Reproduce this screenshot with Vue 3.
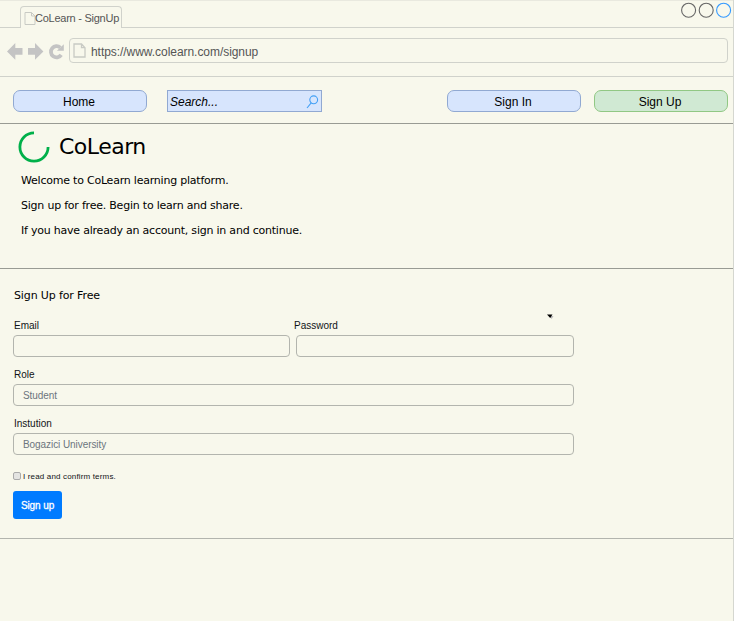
<script setup>
import { ref } from 'vue'

const email = ref('')
const password = ref('')
const role = ref('Student')
const institution = ref('Bogazici University')
const intro = [
  'Welcome to CoLearn learning platform.',
  'Sign up for free. Begin to learn and share.',
  'If you have already an account, sign in and continue.',
]
</script>

<template>
  <div class="window">
    <header class="tabs">
      <div class="strip"></div>
      <div class="tab">
        <svg class="tab-icon" width="12" height="15" viewBox="0 0 12 15">
          <path d="M1 1.5H7.5L11 5V13.5H1ZM7.5 1.5V5H11" />
        </svg>
        <span class="tab-title">CoLearn - SignUp</span>
      </div>
      <div class="strip grow">
        <svg width="52" height="18" viewBox="0 0 52 18">
          <circle cx="7.6" cy="9.2" r="7" />
          <circle cx="25.2" cy="9.2" r="7" />
          <circle class="active" cx="42.6" cy="9.2" r="7" />
        </svg>
      </div>
    </header>

    <div class="toolbar">
      <svg class="controls" width="58" height="18" viewBox="0 0 58 18">
        <path d="M0 9.4L8.3 1V6H15.5V12.8H8.3V17.7Z" />
        <path d="M36.4 9.4L28 1V6H21V12.8H28V17.7Z" />
        <path class="reload" d="M54.2 12.9A5.6 5.6 0 1 1 53.3 5.6" />
        <path d="M56.8 2.2V8.8H49.9Z" />
      </svg>
      <div class="address">
        <svg width="13" height="15" viewBox="0 0 13 15">
          <path d="M1 1H8.5L12 4.7V14H1ZM8.5 1V4.7H12" />
        </svg>
        <span class="url">https://www.colearn.com/signup</span>
      </div>
    </div>

    <nav class="nav">
      <button class="pill">Home</button>
      <div class="search">
        <span class="search-text">Search...</span>
        <svg width="13" height="14" viewBox="0 0 13 14">
          <circle cx="7.7" cy="4.8" r="3.9" />
          <path d="M5.2 7.9L1 13" />
        </svg>
      </div>
      <button class="pill sign-in">Sign In</button>
      <button class="pill green">Sign Up</button>
    </nav>

    <section class="intro">
      <div class="brand">
        <svg width="32" height="32" viewBox="0 0 32 32">
          <path d="M16 1.9A14.1 14.1 0 1 0 30.1 16" />
        </svg>
        <h1>CoLearn</h1>
      </div>
      <p v-for="line in intro" :key="line">{{ line }}</p>
    </section>

    <form class="form" @submit.prevent>
      <h2>Sign Up for Free</h2>
      <svg class="caret" width="7" height="5" viewBox="0 0 7 5">
        <path class="shade" d="M2 2H6.5L4.7 5Z" />
        <path d="M0 .5H5.5L3.2 4Z" />
      </svg>
      <div class="row">
        <label class="field email"><span>Email</span><input v-model="email" type="email" /></label>
        <label class="field password"><span>Password</span><input v-model="password" type="password" /></label>
      </div>
      <label class="field"><span>Role</span><input v-model="role" /></label>
      <label class="field"><span>Instution</span><input v-model="institution" /></label>
      <label class="terms"><input type="checkbox" /><span>I read and confirm terms.</span></label>
      <button class="submit">Sign up</button>
    </form>
  </div>
</template>

<style>
body {
  margin: 0;
  background: #f8f8ec;
}
</style>

<style scoped>
* {
  box-sizing: border-box;
}
.window {
  width: 734px;
  height: 621px;
  background: #f8f8ec;
  border-right: 1px solid #d5d7d0;
  box-shadow: inset 0 1px #e9e9df;
  font-family: "Liberation Sans", Arial, sans-serif;
  color: #000;
  overflow: hidden;
}
svg {
  display: block;
  flex: none;
  fill: none;
}
button {
  font-family: inherit;
  padding: 0;
}
.tabs {
  display: flex;
  height: 28px;
}
.strip {
  width: 20px;
  border-bottom: 1px solid #d0d2cb;
}
.strip.grow {
  flex: 1;
  display: flex;
  justify-content: flex-end;
  padding-top: 1px;
}
.strip circle {
  stroke: #666;
  stroke-width: 1.1;
}
.strip circle.active {
  stroke: #3399ff;
}
.tab {
  display: flex;
  width: 102px;
  height: 22px;
  margin-top: 6px;
  border: 1px solid #d0d2cb;
  border-bottom: 0;
  border-radius: 4px 4px 0 0;
  padding: 4px 0 0 3px;
}
.tab-icon path,
.address path {
  stroke: #c8cac4;
}
.tab-title {
  font-size: 11px;
  line-height: 14px;
  color: #555;
  letter-spacing: -0.25px;
  margin-left: -1px;
  white-space: nowrap;
}
.toolbar {
  display: flex;
  height: 49px;
  padding: 10px 5px 0 7px;
  border-bottom: 1px solid #d0d2cb;
}
.controls {
  margin-top: 4px;
  fill: #c4c4c4;
}
.controls .reload {
  fill: none;
  stroke: #c4c4c4;
  stroke-width: 3.8;
}
.address {
  display: flex;
  align-items: center;
  flex: 1;
  height: 25px;
  margin-left: 4px;
  border: 1px solid #d0d2cb;
  border-radius: 4px;
  padding-left: 3px;
}
.address path {
  stroke-width: 1.3;
}
.url {
  margin: 2px 0 0 5px;
  font-size: 12px;
  line-height: 16px;
  letter-spacing: -0.05px;
  color: #555;
}
.nav {
  display: flex;
  height: 47px;
  padding: 13px 5px 0 13px;
  border-bottom: 1px solid #999b94;
}
.pill {
  width: 134px;
  height: 22px;
  border: 1px solid #91a9d2;
  border-radius: 7px;
  background: #d7e5fd;
  color: #000;
  font-size: 12px;
  line-height: 20px;
  padding: 1px 2px 0 0;
}
.pill.sign-in {
  margin-left: auto;
}
.pill.green {
  margin-left: 13px;
  background: #d0e9d3;
  border-color: #91c884;
}
.search {
  display: flex;
  align-items: flex-start;
  justify-content: space-between;
  width: 155px;
  height: 22px;
  margin-left: 20px;
  padding: 4px 2px 0;
  border: 1px solid #91a9d2;
  background: #d7e5fd;
}
.search-text {
  font-size: 12px;
  line-height: 14px;
  font-style: italic;
}
.search svg {
  stroke: #43a0f5;
  stroke-width: 1.1;
}
.intro {
  height: 145px;
  border-bottom: 1px solid #999b94;
  font-family: "DejaVu Sans", Verdana, sans-serif;
}
.brand {
  display: flex;
  height: 44px;
  padding: 7px 0 0 18px;
}
.brand path {
  stroke: #00b04a;
  stroke-width: 2.8;
}
h1 {
  margin: 0 0 0 9px;
  font-size: 22px;
  line-height: 32px;
  letter-spacing: -0.5px;
  font-weight: 400;
}
.intro p {
  height: 25px;
  margin: 0 0 0 21px;
  font-size: 11px;
  line-height: 25px;
  letter-spacing: -0.22px;
}
.form {
  position: relative;
  height: 270px;
  padding: 18px 0 0 13px;
  border-bottom: 1px solid #b3b5ae;
}
h2 {
  margin: 0 0 12px 1px;
  font-family: "DejaVu Sans", Verdana, sans-serif;
  font-size: 11px;
  line-height: 17px;
  letter-spacing: -0.13px;
  font-weight: 400;
}
.caret {
  position: absolute;
  left: 547px;
  top: 45px;
  fill: #000;
}
.caret .shade {
  fill: #bbb;
}
.row {
  display: flex;
  gap: 6px;
}
.field {
  display: block;
  width: 561px;
  height: 49px;
}
.field.email {
  width: 277px;
}
.field.password {
  width: 278px;
}
.field span {
  display: block;
  height: 19px;
  padding-left: 1px;
  font-size: 10px;
  line-height: 20px;
  color: #111417;
}
.password span {
  margin-left: -3px;
}
.field input {
  display: block;
  width: 100%;
  height: 22px;
  border: 1px solid #b3b5ae;
  border-radius: 4px;
  background: transparent;
  padding: 1px 9px 0;
  outline: none;
  font: 10px "Liberation Sans", Arial, sans-serif;
  letter-spacing: -0.07px;
  color: #6c757d;
}
.terms {
  display: flex;
  align-items: center;
  height: 12px;
  margin-top: 7px;
  font-size: 8px;
  letter-spacing: 0.16px;
  color: #111417;
}
.terms input {
  appearance: none;
  width: 8px;
  height: 8px;
  margin: 0 2px 0 0;
  border: 1px solid #aaa;
  border-radius: 2px;
  background: #e4e4e2;
}
.submit {
  display: block;
  width: 49px;
  height: 28px;
  margin-top: 9px;
  border: 0;
  border-radius: 3px;
  background: #007bff;
  color: #fff;
  font-size: 10px;
  letter-spacing: -0.1px;
  -webkit-text-stroke: 0.3px #fff;
}
</style>
